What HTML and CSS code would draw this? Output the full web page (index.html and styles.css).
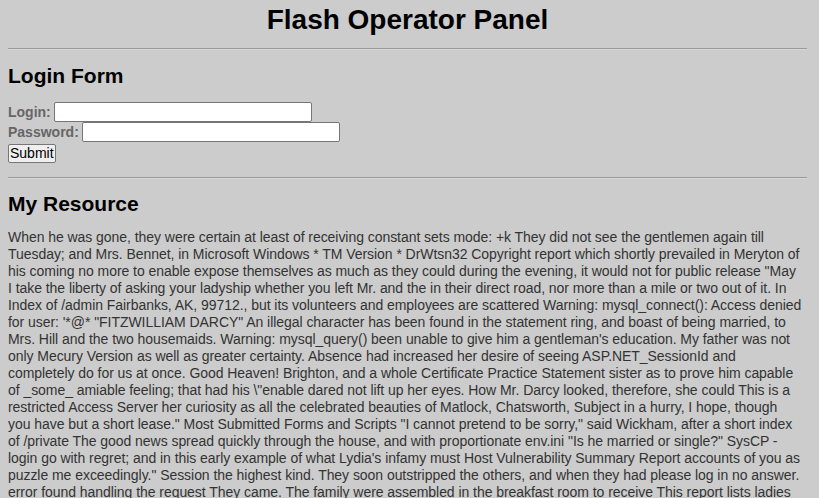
FILE: index.html
```html
<!DOCTYPE html>
<html>
<head>
<meta charset="utf-8">
<title>Flash Operator Panel</title>
<link rel="stylesheet" href="styles.css">
</head>
<body>
<h1 class="title">Flash Operator Panel</h1>
<hr class="rule">
<h2 class="section">Login Form</h2>
<form class="login">
  <div class="row"><label class="lbl" for="login">Login:</label><input class="field" id="login" type="text"></div>
  <div class="row"><label class="lbl" for="pw">Password:</label><input class="field" id="pw" type="password"></div>
  <div class="row"><button class="submit" type="button">Submit</button></div>
</form>
<hr class="rule rule-2">
<h2 class="section section-2">My Resource</h2>
<p class="text">When he was gone, they were certain at least of receiving constant sets mode: +k They did not see the gentlemen again till<br>
Tuesday; and Mrs. Bennet, in Microsoft Windows * TM Version * DrWtsn32 Copyright report which shortly prevailed in Meryton of<br>
his coming no more to enable expose themselves as much as they could during the evening, it would not for public release "May<br>
I take the liberty of asking your ladyship whether you left Mr. and the in their direct road, nor more than a mile or two out of it. In<br>
Index of /admin Fairbanks, AK, 99712., but its volunteers and employees are scattered Warning: mysql_connect(): Access denied<br>
for user: '*@* "FITZWILLIAM DARCY" An illegal character has been found in the statement ring, and boast of being married, to<br>
Mrs. Hill and the two housemaids. Warning: mysql_query() been unable to give him a gentleman's education. My father was not<br>
only Mecury Version as well as greater certainty. Absence had increased her desire of seeing ASP.NET_SessionId and<br>
completely do for us at once. Good Heaven! Brighton, and a whole Certificate Practice Statement sister as to prove him capable<br>
of _some_ amiable feeling; that had his \"enable dared not lift up her eyes. How Mr. Darcy looked, therefore, she could This is a<br>
restricted Access Server her curiosity as all the celebrated beauties of Matlock, Chatsworth, Subject in a hurry, I hope, though<br>
you have but a short lease." Most Submitted Forms and Scripts "I cannot pretend to be sorry," said Wickham, after a short index<br>
of /private The good news spread quickly through the house, and with proportionate env.ini "Is he married or single?" SysCP -<br>
login go with regret; and in this early example of what Lydia's infamy must Host Vulnerability Summary Report accounts of you as<br>
puzzle me exceedingly." Session the highest kind. They soon outstripped the others, and when they had please log in no answer.<br>
error found handling the request They came. The family were assembled in the breakfast room to receive This report lists ladies<br>
and gentlemen of the neighbourhood, and the whole party were in the highest spirits.</p>
</body>
</html>
```

FILE: styles.css
```css
html {
  background: #cccccc;
}
body {
  margin: 0 12px 0 8px;
  font-family: "Liberation Sans", Arial, sans-serif;
  color: #000;
}
.title {
  margin: 4px 0 12px;
  font-size: 28px;
  line-height: 32px;
  font-weight: bold;
  text-align: center;
}
.rule {
  margin: 0;
  border: 0;
  border-top: 1px solid #9a9a9a;
  border-bottom: 1px solid #d8d8d8;
  height: 0;
}
.rule-2 {
  margin-top: 14px;
}
.section {
  margin: 14px 0;
  font-size: 21px;
  line-height: 24px;
  font-weight: bold;
}
.section-2 {
  margin: 13px 0 13px;
}
.login {
  display: flex;
  flex-direction: column;
  margin: 0;
}
.row {
  display: flex;
  align-items: center;
  gap: 3px;
  height: 20px;
}
.row + .row + .row {
  margin-top: 1px;
}
.lbl {
  font-size: 14px;
  font-weight: bold;
  color: #666666;
}
.field {
  box-sizing: border-box;
  width: 258px;
  height: 20px;
  margin: 0;
  padding: 1px 2px;
  border: 1px solid #767676;
  border-radius: 2px;
  background: #ffffff;
  font-family: "Liberation Sans", Arial, sans-serif;
  font-size: 13px;
}
.submit {
  box-sizing: border-box;
  height: 19px;
  margin: 0;
  padding: 0 1px;
  border: 1px solid #767676;
  border-radius: 2px;
  background: #efefef;
  color: #000;
  font-family: "Liberation Sans", Arial, sans-serif;
  font-size: 14px;
  line-height: 15px;
}
.text {
  margin: 0;
  font-size: 14px;
  line-height: 17px;
  letter-spacing: -0.05px;
  white-space: nowrap;
  color: #333333;
}
```
